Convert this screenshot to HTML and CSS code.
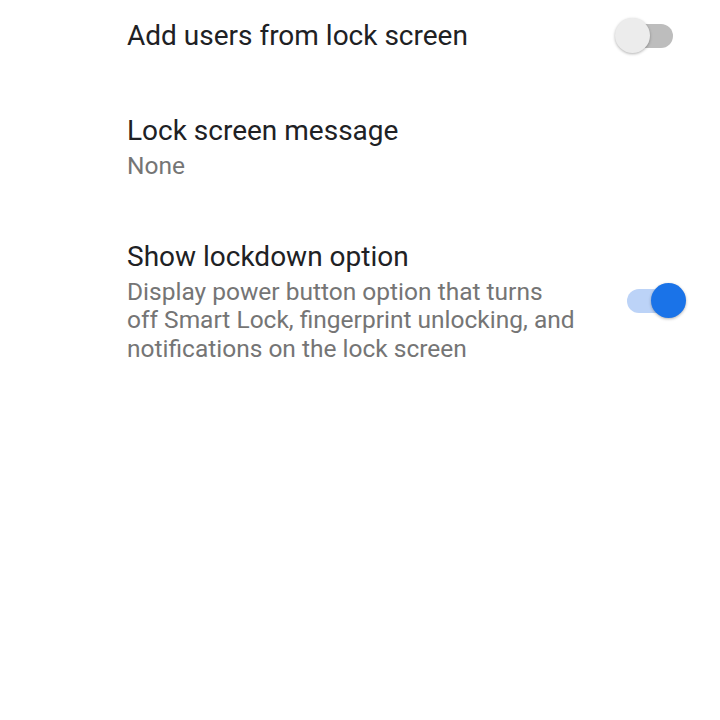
FILE: index.html
```
<html>
	<head>
		<title>Lock screen</title>
		<link rel="stylesheet" href="styles.css">
	</head>
	<body>
		<div class="List">
			<div class="Row">
				<div class="Text">
					<div class="Title">Add users from lock screen</div>
				</div>
				<div class="Switch Off">
					<div class="Track"></div>
					<div class="Thumb"></div>
				</div>
			</div>
			<div class="Row">
				<div class="Text">
					<div class="Title">Lock screen message</div>
					<div class="Summary">None</div>
				</div>
			</div>
			<div class="Row">
				<div class="Text">
					<div class="Title">Show lockdown option</div>
					<div class="Summary">Display power button option that turns<br/>off Smart Lock, fingerprint unlocking, and<br/>notifications on the lock screen</div>
				</div>
				<div class="Switch On">
					<div class="Track"></div>
					<div class="Thumb"></div>
				</div>
			</div>
		</div>
	</body>
</html>
```
FILE: styles.css
```
html, body {margin: 0; height: 100%; overflow: hidden; background-color: white;}

body {
	font-family: Roboto, "Noto Sans", sans-serif;
}

.List {
	display: flex;
	flex-direction: column;
	gap: 58.5px;
	padding-top: 18px;
}

.Row {
	display: flex;
	align-items: center;
	padding: 0 34px 0 127px;
}

.Text {
	flex: 1;
}

.Title {
	font-size: 28px;
	line-height: 36px;
	color: #202124;
}

.Summary {
	margin-top: 3px;
	font-size: 24.5px;
	line-height: 28.5px;
	color: #757575;
}

.Switch {
	position: relative;
	width: 72px;
	height: 36px;
	flex: none;
}

.Track {
	position: absolute;
	top: 6px;
	width: 53px;
	height: 24px;
	border-radius: 12px;
}

.Thumb {
	position: absolute;
	top: 0;
	width: 35px;
	height: 35px;
	border-radius: 50%;
	box-shadow: 0 1px 3px rgba(0, 0, 0, 0.3);
}

.Off .Track {left: 6px; background-color: #bdbdbd;}
.Off .Thumb {left: 1px; background-color: #ececec;}

.On .Track {left: 13px; background-color: #bcd3f7;}
.On .Thumb {left: 37px; background-color: #1a73e8;}
```
